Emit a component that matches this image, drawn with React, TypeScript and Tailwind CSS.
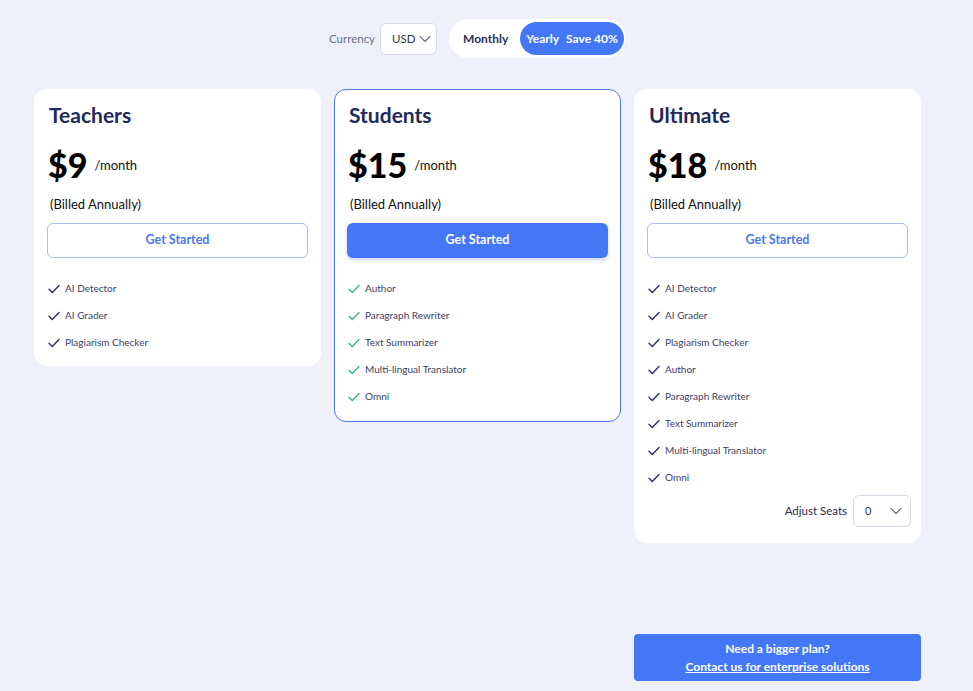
import React from "react";

const font = { fontFamily: 'Lato, "Noto Sans", sans-serif' };

function Check({ color }: { color: string }) {
  return (
    <svg width="12" height="10" viewBox="0 0 12 10" fill="none">
      <path d="M1 5.2 L4.3 8.5 L11 1.5" stroke={color} strokeWidth="1.4" strokeLinecap="round" strokeLinejoin="round" />
    </svg>
  );
}

function Chevron() {
  return (
    <svg width="12" height="8" viewBox="0 0 12 8" fill="none">
      <path d="M1 1.5 L6 6.5 L11 1.5" stroke="#6b7280" strokeWidth="1.1" strokeLinecap="round" strokeLinejoin="round" />
    </svg>
  );
}

type Plan = {
  name: string;
  price: string;
  features: string[];
  highlight?: boolean;
  seats?: boolean;
};

const plans: Plan[] = [
  { name: "Teachers", price: "$9", features: ["AI Detector", "AI Grader", "Plagiarism Checker"] },
  {
    name: "Students",
    price: "$15",
    highlight: true,
    features: ["Author", "Paragraph Rewriter", "Text Summarizer", "Multi-lingual Translator", "Omni"],
  },
  {
    name: "Ultimate",
    price: "$18",
    seats: true,
    features: [
      "AI Detector",
      "AI Grader",
      "Plagiarism Checker",
      "Author",
      "Paragraph Rewriter",
      "Text Summarizer",
      "Multi-lingual Translator",
      "Omni",
    ],
  },
];

function Card({ plan }: { plan: Plan }) {
  const hl = plan.highlight;
  const pad = hl ? "pb-[16px]" : plan.seats ? "pb-[15px]" : "pb-[14px]";
  return (
    <div
      className={
        "bg-white rounded-[12px] px-[12px] pt-[12px] border " +
        (hl ? "border-[#4a79ee] " : "border-white ") +
        pad
      }
    >
      <div className="pl-[2px] text-[21px] font-bold leading-[26px] text-[#1f2a5c]">{plan.name}</div>
      <div className="mt-[17px] flex items-center pl-[1px]">
        <span className="text-[34px] font-black leading-[40px] text-black">{plan.price}</span>
        <span className="ml-[7px] text-[13px] text-[#111] mt-[1px]">/month</span>
      </div>
      <div className="mt-[10px] pl-[3px] text-[13px] leading-[18px] text-[#111]">(Billed Annually)</div>
      <button
        className={
          "mt-[10px] w-full h-[35px] rounded-[6px] text-[12.5px] font-bold " +
          (hl
            ? "bg-[#4477f6] text-white shadow-[0_2px_4px_rgba(40,70,160,0.25)]"
            : "bg-white text-[#4a78e8] border border-[#a9c0f2]")
        }
      >
        Get Started
      </button>
      <ul className="mt-[22px] flex flex-col gap-[10px]">
        {plan.features.map((f) => (
          <li key={f} className="flex items-center h-[17px] pl-[1px]">
            <Check color={hl ? "#3bb58c" : "#2b2f5c"} />
            <span className="ml-[5px] text-[10px] text-[#3e4163]">{f}</span>
          </li>
        ))}
      </ul>
      {plan.seats && (
        <div className="mt-[9px] flex items-center justify-end">
          <span className="text-[11.5px] text-[#2a2d4a] mr-[6px]">Adjust Seats</span>
          <div className="w-[58px] h-[32px] border border-[#d4d8e4] rounded-[6px] flex items-center justify-between pl-[11px] pr-[8px] mr-[-3px]">
            <span className="text-[11px] text-[#333]">0</span>
            <Chevron />
          </div>
        </div>
      )}
    </div>
  );
}

export default function App() {
  return (
    <div className="min-h-[691px] w-full bg-[#eef1fa]" style={font}>
      <div className="flex items-center pt-[19px] pl-[329px]">
        <span className="text-[11.5px] text-[#6b7080]">Currency</span>
        <div className="ml-[5px] w-[57px] h-[32px] bg-white border border-[#d5d9e6] rounded-[6px] flex items-center justify-between pl-[11px] pr-[5px]">
          <span className="text-[11.5px] text-[#333]">USD</span>
          <Chevron />
        </div>
        <div className="ml-[12px] h-[39px] w-[177px] bg-white rounded-full flex items-center pl-[14px] pr-[2px]">
          <span className="text-[12px] font-bold text-[#2a2f55]">Monthly</span>
          <div className="ml-auto h-[33px] w-[104px] rounded-full bg-[#4477f6] flex items-center justify-center gap-[7px] text-[12px] font-bold text-white">
            <span>Yearly</span>
            <span>Save 40%</span>
          </div>
        </div>
      </div>
      <div className="pl-[34px] mt-[31px] w-[921px] grid grid-cols-3 gap-[13px] items-start">
        {plans.map((p) => (
          <Card key={p.name} plan={p} />
        ))}
      </div>
      <div className="pl-[34px] w-[921px] grid grid-cols-3 gap-[13px] mt-[91px]">
        <div className="col-start-3 h-[47px] bg-[#4477f6] rounded-[4px] flex flex-col items-center justify-center text-white text-[12px] font-bold leading-[18px]">
          <span>Need a bigger plan?</span>
          <span className="underline">Contact us for enterprise solutions</span>
        </div>
      </div>
    </div>
  );
}
